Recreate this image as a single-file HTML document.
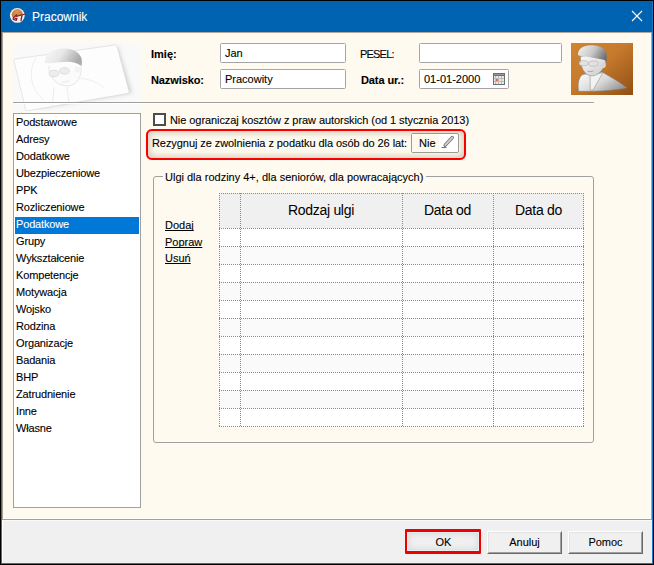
<!DOCTYPE html>
<html><head><meta charset="utf-8">
<style>
*{box-sizing:border-box;margin:0;padding:0}
html,body{width:654px;height:565px;overflow:hidden;background:#000}
body{position:relative;font-family:"Liberation Sans",sans-serif;font-size:11px;color:#000;-webkit-text-stroke:0.1px currentColor}
.a{position:absolute}
#win{left:1px;top:1px;width:652px;height:563px;background:#1a78c8}
#title{left:1px;top:1px;width:651px;height:31px;background:#0063b1}
#content{left:2px;top:32px;width:650px;height:488px;background:#fffaef;border-left:1px solid #a89e94;border-right:1px solid #b0a69a;border-top:1px solid #b0a69a;border-bottom:1px solid #a0a0a0;box-shadow:inset -1px -1px 0 #fffff8}
#bottom{left:2px;top:520px;width:650px;height:43px;background:#f0f0f0;border-left:1px solid #fff;border-top:1px solid #fafafa}
.t{position:absolute;white-space:nowrap;line-height:13px}
.box{position:absolute;background:#fff;border:1px solid #a5a5a5;border-radius:1.5px}
.lb{position:absolute;left:13px;top:113px;width:128px;height:395px;background:#fff;border:1px solid #a0a0a0}
.li{position:absolute;left:1px;width:124px;padding-left:1px;height:17px;line-height:14px;white-space:nowrap;letter-spacing:-0.15px}
.li.sel{background:#0078d7;color:#fff}
.btn{position:absolute;top:531px;width:75px;height:23px;background:#f0f0f0;border-style:solid;border-width:1px;border-color:#fff #696969 #696969 #fff;text-align:center;line-height:21px;font-size:11px}
.btn>i{position:absolute;left:0;top:0;right:0;bottom:0;border-style:solid;border-width:1px;border-color:#e3e3e3 #a0a0a0 #a0a0a0 #e3e3e3}
.btn>span{position:relative}
.grp{position:absolute;left:153px;top:176px;width:441px;height:267px;border:1px solid #a0a0a0;border-radius:3px}
.lnk{position:absolute;left:165px;text-decoration:underline;text-decoration-skip-ink:none;line-height:13px;white-space:nowrap}
.grid{position:absolute;left:219px;top:193px;width:365px;height:234px;background:#fff}
.hdr{position:absolute;left:0;top:0;width:365px;height:35px;background:#f0f0f0}
.hl{position:absolute;height:1px;background-image:linear-gradient(to right,#8a8a8a 50%,transparent 50%);background-size:2px 1px}
.vl{position:absolute;width:1px;background-image:linear-gradient(to bottom,#8a8a8a 50%,transparent 50%);background-size:1px 2px}
.ht{position:absolute;top:0;height:35px;line-height:35px;text-align:center;font-size:14px;letter-spacing:-0.3px;-webkit-text-stroke:0}
</style></head><body>
<div id="win" class="a"></div>
<div id="title" class="a"></div>
<!-- app icon -->
<svg class="a" style="left:9px;top:7px" width="18" height="17" viewBox="9 7 18 17">
  <defs><radialGradient id="ball" cx="0.45" cy="0.2" r="0.8"><stop offset="0" stop-color="#d9975a"/><stop offset="1" stop-color="#b87430"/></radialGradient>
  <clipPath id="topc"><path d="M8 7 L27 7 L27 13.6 L8 18.2Z"/></clipPath></defs>
  <circle cx="17.3" cy="15.4" r="7.4" fill="#f6f0ec"/>
  <circle cx="17.3" cy="14.6" r="5.6" fill="url(#ball)" clip-path="url(#topc)"/>
  <g fill="none" stroke="#921c24" stroke-linecap="round" stroke-linejoin="round">
    <path d="M16.8 14.8 L13.2 18 L13.3 19.4 L16.3 20.3 L17 18.4 L15 18.4" stroke-width="1.25"/>
    <path d="M16.3 16.4 L25.4 14" stroke-width="1.1"/>
    <path d="M22 15.4 L21 20.5" stroke-width="1.35"/>
  </g>
</svg>
<div class="t" style="left:32px;top:10px;font-size:12px;color:#fff;line-height:14px">Pracownik</div>
<!-- close X -->
<svg class="a" style="left:631px;top:10px" width="12" height="12" viewBox="0 0 12 12"><path d="M1 1L11 11M11 1L1 11" stroke="#fff" stroke-width="1.1"/></svg>
<div id="content" class="a"></div>
<div id="bottom" class="a"></div>

<!-- photo placeholder left -->
<div class="a" style="left:13px;top:43px;width:128px;height:68px;background:#f9f9f9"></div>
<svg class="a" style="left:13px;top:43px" width="128" height="68" viewBox="13 43 128 68">
  <defs>
    <filter id="bl" x="-30%" y="-30%" width="160%" height="160%"><feGaussianBlur stdDeviation="2.2"/></filter>
    <linearGradient id="hair" x1="0" y1="0" x2="1" y2="0.3">
      <stop offset="0" stop-color="#f8f8f8"/><stop offset="0.5" stop-color="#e8e8e8"/><stop offset="1" stop-color="#acacac"/>
    </linearGradient>
    <clipPath id="cc"><path d="M14 61 Q13 59.5 15 59 L115 45 Q116.5 45 117 46.5 L129 91 Q129.5 93 127.5 93.5 L26 111 L14 61Z"/></clipPath>
  </defs>
  <path d="M20 62 L118 47 L132 93 L40 108Z" fill="#b8b8b8" filter="url(#bl)" opacity="0.6"/>
  <path d="M14 61 Q13 59.5 15 59 L115 45 Q116.5 45 117 46.5 L129 91 Q129.5 93 127.5 93.5 L26 111 L14 61Z" fill="#fdfdfd" stroke="#d0d0d0" stroke-width="0.5"/>
  <g clip-path="url(#cc)" fill="none" stroke="#e9e9e9" stroke-width="0.8">
    <path d="M36 58 C28 70 30 90 44 100"/>
    <path d="M54 87 L52 112 M67 87 L70 112"/>
    <path d="M81 78 C90 80 98 82 104 88"/>
  </g>
  <path d="M49 66 C48 76 56 86 68 86 C78 85 82 76 81 66" fill="#fbfbfb" stroke="#dcdcdc" stroke-width="0.7"/>
  <path d="M44.5 63 C44 55 52 48.5 64 48.5 C75 48.5 82 54 82 62 L81.5 66 C76 62 70 61.5 64 62 C56 62.5 50 64 44.5 63Z" fill="url(#hair)"/>
  <ellipse cx="54" cy="73.5" rx="5" ry="3.2" fill="#ededed" stroke="#d8d8d8" stroke-width="0.8"/>
  <ellipse cx="64.5" cy="71" rx="5" ry="3.2" fill="#ededed" stroke="#d8d8d8" stroke-width="0.8"/>
  <ellipse cx="77.5" cy="69.5" rx="2.5" ry="3" fill="#f3f3f3"/>
  <path d="M62 82 C65 82.5 68 81.5 69 80.5" fill="none" stroke="#e0e0e0" stroke-width="0.8"/>
</svg>
<!-- header labels -->
<div class="t" style="left:151px;top:48px;font-weight:bold">Imię:</div>
<div class="t" style="left:151px;top:74px;font-weight:bold;letter-spacing:-0.1px">Nazwisko:</div>
<div class="box" style="left:220px;top:43px;width:126px;height:20px"></div>
<div class="box" style="left:220px;top:69px;width:126px;height:20px"></div>
<div class="t" style="left:225px;top:47px">Jan</div>
<div class="t" style="left:225px;top:73px">Pracowity</div>
<div class="t" style="left:360px;top:48px;letter-spacing:-0.8px">PESEL:</div>
<div class="t" style="left:361px;top:74px;font-weight:bold;letter-spacing:-0.1px">Data ur.:</div>
<div class="box" style="left:419px;top:43px;width:143px;height:20px"></div>
<div class="box" style="left:419px;top:69px;width:90px;height:20px"></div>
<div class="t" style="left:424px;top:73px">01-01-2000</div>
<!-- calendar icon -->
<svg class="a" style="left:493px;top:73px" width="12" height="12" viewBox="0 0 12 12">
  <rect x="0" y="0" width="12" height="12" fill="#6e6e6e"/>
  <rect x="1" y="3" width="10" height="8" fill="#bdbdbd"/>
  <rect x="1" y="1" width="10" height="1" fill="#9a9a9a"/>
  <g fill="#e8e8e8">
   <rect x="1" y="3" width="1" height="2"/><rect x="3" y="3" width="2" height="2"/><rect x="6" y="3" width="2" height="2"/><rect x="9" y="3" width="2" height="2"/>
   <rect x="1" y="6" width="1" height="2"/><rect x="6" y="6" width="2" height="2"/><rect x="9" y="6" width="2" height="2"/>
   <rect x="1" y="9" width="1" height="2"/><rect x="3" y="9" width="2" height="2"/><rect x="6" y="9" width="2" height="2"/><rect x="9" y="9" width="2" height="2"/>
  </g>
  <rect x="3" y="6" width="2" height="2" fill="#f06a2a"/>
</svg>
<!-- photo right -->
<svg class="a" style="left:571px;top:43px" width="62" height="52" viewBox="0 0 62 52">
  <defs>
    <linearGradient id="og" x1="0" y1="0" x2="1" y2="1">
      <stop offset="0" stop-color="#cf8536"/><stop offset="0.45" stop-color="#c67a2c"/><stop offset="1" stop-color="#8f4f14"/>
    </linearGradient>
    <linearGradient id="wg" x1="0" y1="0.2" x2="1" y2="0.8">
      <stop offset="0" stop-color="#fafafa"/><stop offset="0.5" stop-color="#d8d8d8"/><stop offset="1" stop-color="#8c8c8c"/>
    </linearGradient>
    <linearGradient id="hg" x1="0" y1="0.2" x2="1" y2="0.6">
      <stop offset="0" stop-color="#f0f0f0"/><stop offset="0.5" stop-color="#c8c8c8"/><stop offset="1" stop-color="#6e6e6e"/>
    </linearGradient>
    <linearGradient id="fg" x1="0" y1="0" x2="1" y2="1">
      <stop offset="0" stop-color="#fbfbfb"/><stop offset="1" stop-color="#c9c9c9"/>
    </linearGradient>
  </defs>
  <rect width="62" height="52" fill="url(#og)"/>
  <path d="M7.7 48.3 C6.5 42 7.5 35 11 32 C14 30.5 17 31 19.5 32.5 L31 29 C40 34 50 40 55.8 44.7 C45 47.5 25 48.5 7.7 48.3Z" fill="url(#wg)" stroke="#808080" stroke-width="0.5"/>
  <path d="M19 32.5 L19.3 47.2 L22 47 L32 29.5 Z" fill="#f2f2f2" stroke="#858585" stroke-width="0.5"/>
  <path d="M9.5 13.5 C9 23 13 32.8 21 32.9 C28 32.5 33 26 35 18 L34 13 C26 12 16 12 9.5 13.5Z" fill="url(#fg)" stroke="#8a8a8a" stroke-width="0.5"/>
  <path d="M7 10.5 C8 4 15 2.2 21 2.3 C29 2.4 35 6 35.6 11 C36 14 35.8 17 35.6 19.8 C34.5 17.5 33 16.6 31.5 16.6 C26 15.8 20 14.5 15 13.6 C12 13.1 9 13 7.8 12.6 C7 12 6.9 11.3 7 10.5Z" fill="url(#hg)"/>
  <ellipse cx="12.6" cy="20.2" rx="4.6" ry="2.6" fill="#e2e2e2" stroke="#a8a8a8" stroke-width="0.6" opacity="0.9"/>
  <ellipse cx="22.4" cy="20.6" rx="4.8" ry="2.6" fill="#e2e2e2" stroke="#a8a8a8" stroke-width="0.6" opacity="0.9"/>
  <ellipse cx="32.6" cy="22" rx="2.2" ry="3" fill="#d6d6d6"/>
  <path d="M16.5 28.2 C18.5 28.9 21 28.6 22.5 27.8" fill="none" stroke="#8e8e8e" stroke-width="0.7"/>
</svg>

<div class="a" style="left:13px;top:102px;width:581px;height:1px;background:#a0a0a0"></div>
<div class="a" style="left:13px;top:103px;width:581px;height:1px;background:#fff"></div>

<!-- list -->
<div class="lb">
<div class="li" style="top:1px">Podstawowe</div>
<div class="li" style="top:18px">Adresy</div>
<div class="li" style="top:35px">Dodatkowe</div>
<div class="li" style="top:52px">Ubezpieczeniowe</div>
<div class="li" style="top:69px">PPK</div>
<div class="li" style="top:86px">Rozliczeniowe</div>
<div class="li sel" style="top:103px">Podatkowe</div>
<div class="li" style="top:120px">Grupy</div>
<div class="li" style="top:137px">Wykształcenie</div>
<div class="li" style="top:154px">Kompetencje</div>
<div class="li" style="top:171px">Motywacja</div>
<div class="li" style="top:188px">Wojsko</div>
<div class="li" style="top:205px">Rodzina</div>
<div class="li" style="top:222px">Organizacje</div>
<div class="li" style="top:239px">Badania</div>
<div class="li" style="top:256px">BHP</div>
<div class="li" style="top:273px">Zatrudnienie</div>
<div class="li" style="top:290px">Inne</div>
<div class="li" style="top:307px">Własne</div>
</div>

<!-- checkbox row -->
<div class="a" style="left:153px;top:113px;width:13px;height:13px;border:2px solid #4d4d4d;background:#fff"></div>
<div class="t" style="left:170px;top:114px;letter-spacing:-0.07px">Nie ograniczaj kosztów z praw autorskich (od 1 stycznia 2013)</div>

<!-- red highlight row -->
<div class="a" style="left:146px;top:129px;width:320px;height:31px;border:2px solid #f80000;border-radius:6px;box-shadow:0 0 0.6px #f00, inset 0 0 6px 2px rgba(110,95,70,0.3)"></div>
<div class="t" style="left:152px;top:137px;letter-spacing:-0.07px">Rezygnuj ze zwolnienia z podatku dla osób do 26 lat:</div>
<div class="a" style="left:411px;top:133px;width:48px;height:20px;border:1px solid #9a9a9a;border-radius:2px;background:#fff"></div>
<div class="a" style="left:412px;top:134px;width:27px;height:18px;background:#fff8ec"></div>
<div class="t" style="left:419px;top:137px">Nie</div>
<svg class="a" style="left:440px;top:135px" width="16" height="15" viewBox="440 135 16 15">
  <path d="M445.2 145.2 L452.2 137.6" stroke="#6a6a6a" stroke-width="3.4" stroke-linecap="round"/>
  <path d="M445.2 145.2 L452.2 137.6" stroke="#d2d2d2" stroke-width="1.9" stroke-linecap="round"/>
  <path d="M443.6 147.6 L444.2 145 L446.4 146.4Z" fill="#8a8a8a"/>
  <path d="M441.5 147.5 L446.5 147.5" stroke="#1e8ad6" stroke-width="1"/>
</svg>

<!-- group -->
<div class="grp"></div>
<div class="a" style="left:163px;top:170px;width:263px;height:12px;background:#fffaef"></div>
<div class="t" style="left:165px;top:171px">Ulgi dla rodziny 4+, dla seniorów, dla powracających)</div>
<div class="lnk" style="top:219px">Dodaj</div>
<div class="lnk" style="top:236px">Popraw</div>
<div class="lnk" style="top:252px">Usuń</div>

<!-- grid -->
<div class="grid">
  <div class="hdr"></div>
  <div class="a" style="left:0;top:53px;width:365px;height:18px;background:#fafafa"></div>
  <div class="a" style="left:0;top:89px;width:365px;height:18px;background:#fafafa"></div>
  <div class="a" style="left:0;top:125px;width:365px;height:18px;background:#fafafa"></div>
  <div class="a" style="left:0;top:161px;width:365px;height:18px;background:#fafafa"></div>
  <div class="a" style="left:0;top:197px;width:365px;height:18px;background:#fafafa"></div>
  <div class="ht" style="left:21px;width:162px">Rodzaj ulgi</div>
  <div class="ht" style="left:183px;width:91px">Data od</div>
  <div class="ht" style="left:274px;width:91px">Data do</div>
  <div class="hl" style="left:0;top:0;width:365px"></div>
  <div class="hl" style="left:0;top:35px;width:365px"></div>
  <div class="hl" style="left:0;top:53px;width:365px"></div>
  <div class="hl" style="left:0;top:71px;width:365px"></div>
  <div class="hl" style="left:0;top:89px;width:365px"></div>
  <div class="hl" style="left:0;top:107px;width:365px"></div>
  <div class="hl" style="left:0;top:125px;width:365px"></div>
  <div class="hl" style="left:0;top:143px;width:365px"></div>
  <div class="hl" style="left:0;top:161px;width:365px"></div>
  <div class="hl" style="left:0;top:179px;width:365px"></div>
  <div class="hl" style="left:0;top:197px;width:365px"></div>
  <div class="hl" style="left:0;top:215px;width:365px"></div>
  <div class="hl" style="left:0;top:233px;width:365px"></div>
  <div class="vl" style="left:0;top:0;height:234px"></div>
  <div class="vl" style="left:21px;top:0;height:234px"></div>
  <div class="vl" style="left:183px;top:0;height:234px"></div>
  <div class="vl" style="left:274px;top:0;height:234px"></div>
  <div class="vl" style="left:364px;top:0;height:234px"></div>
</div>

<!-- buttons -->
<div class="btn" style="left:406px;border-color:#f0f0f0"><span>OK</span></div>
<div class="a" style="left:405px;top:529px;width:76px;height:25px;border:2px solid #ee0000;border-top-width:3px;border-bottom-width:3px;border-radius:1px;box-shadow:inset 0 0 0 1px #e4eeee, inset 0 0 6px 2px rgba(0,0,0,0.09)"></div>
<div class="btn" style="left:487px"><i></i><span>Anuluj</span></div>
<div class="btn" style="left:568px"><i></i><span>Pomoc</span></div>
</body></html>
